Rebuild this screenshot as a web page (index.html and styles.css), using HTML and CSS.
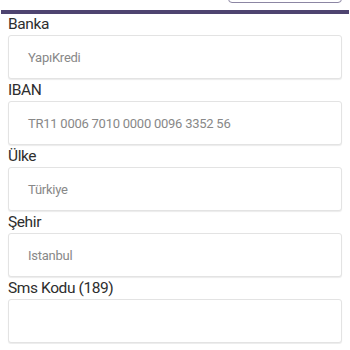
FILE: index.html
```html
<!DOCTYPE html>
<html lang="tr">
<head>
    <meta charset="UTF-8">
    <meta name="viewport" content="width=device-width, initial-scale=1.0">
    <link rel="stylesheet" href="styles.css">
    <title>Banka Bilgileri</title>
</head>
<body>
    <div class="top-actions">
        <button class="top-button" aria-label="Kaydet"></button>
    </div>
    <div class="divider"></div>

    <form class="bank-form">
        <label class="field-label">Banka</label>
        <div class="field-box">YapıKredi</div>

        <label class="field-label">IBAN</label>
        <div class="field-box">TR11 0006 7010 0000 0096 3352 56</div>

        <label class="field-label">Ülke</label>
        <div class="field-box">Türkiye</div>

        <label class="field-label">Şehir</label>
        <div class="field-box">Istanbul</div>

        <label class="field-label">Sms Kodu (189)</label>
        <div class="field-box"></div>
    </form>
</body>
</html>
```

FILE: styles.css
```css
/* reset */
* {
    margin: 0;
    padding: 0;
    box-sizing: border-box;
}

body {
    font-family: Roboto, "Noto Sans", Arial, sans-serif;
    background-color: #fff;
    color: #333;
}

.top-actions {
    display: flex;
    justify-content: flex-end;
    padding-right: 8px;
    height: 10px;
}

.top-button {
    width: 114px;
    height: 30px;
    margin-top: -27px;
    background-color: #fff;
    border: 1px solid #8c86a3;
    border-radius: 4px;
}

.divider {
    height: 4px;
    margin: 0 1px;
    background-color: #4e4470;
}

.bank-form {
    display: flex;
    flex-direction: column;
    padding: 0 8px;
}

.field-label {
    font-size: 15.5px;
    line-height: 20px;
    letter-spacing: -0.4px;
    color: #2e2e2e;
    margin-bottom: 1px;
}

.field-box {
    height: 44px;
    margin-bottom: 1px;
    padding-left: 19px;
    display: flex;
    align-items: center;
    font-size: 13px;
    letter-spacing: -0.25px;
    color: #888;
    background-color: #fff;
    border: 1px solid #e3e3e3;
    border-radius: 3px;
    box-shadow: 0 1px 1px rgba(0, 0, 0, 0.08);
}
```
